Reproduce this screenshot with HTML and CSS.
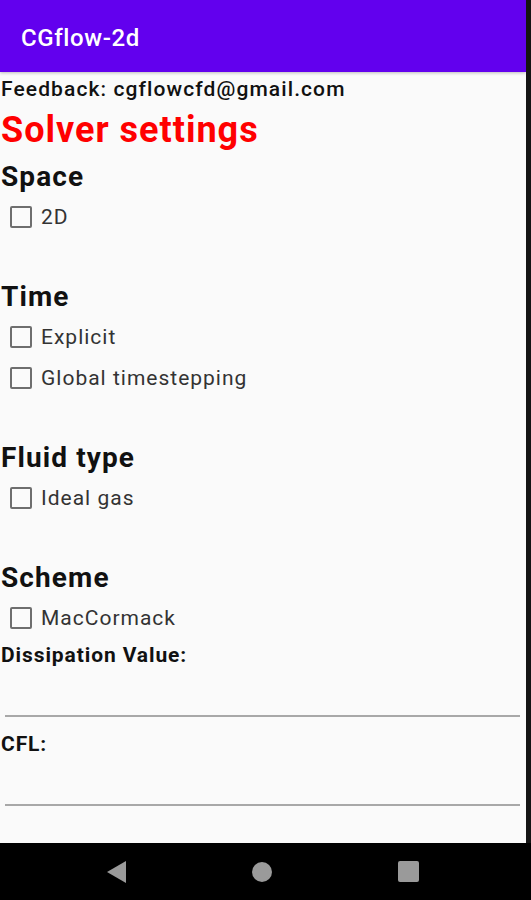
FILE: index.html
```html
<!DOCTYPE html>
<html lang="en">
<head>
    <meta charset="UTF-8">
    <meta name="viewport" content="width=device-width, initial-scale=1.0">
    <title>CGflow-2d</title>
    <link rel="stylesheet" href="styles.css">
</head>
<body>

<div class="screen">
    <div class="app">
        <header class="app-bar">CGflow-2d</header>
        <div class="content">
            <p class="feedback">Feedback: cgflowcfd@gmail.com</p>
            <h1 class="title">Solver settings</h1>

            <div class="group">
                <h2>Space</h2>
                <label class="check"><span class="box"></span>2D</label>
            </div>

            <div class="group">
                <h2>Time</h2>
                <label class="check"><span class="box"></span>Explicit</label>
                <label class="check"><span class="box"></span>Global timestepping</label>
            </div>

            <div class="group">
                <h2>Fluid type</h2>
                <label class="check"><span class="box"></span>Ideal gas</label>
            </div>

            <div class="group last">
                <h2>Scheme</h2>
                <label class="check"><span class="box"></span>MacCormack</label>
            </div>

            <div class="field">
                <p class="field-label">Dissipation Value:</p>
                <div class="input"></div>
            </div>
            <div class="field">
                <p class="field-label">CFL:</p>
                <div class="input"></div>
            </div>
        </div>
    </div>
    <nav class="nav-bar">
        <span class="nav-back"></span>
        <span class="nav-home"></span>
        <span class="nav-recent"></span>
    </nav>
</div>

</body>
</html>
```

FILE: styles.css
```css
body {
    margin: 0;
    font-family: Roboto, "Liberation Sans", sans-serif;
    background-color: #000;
}
.screen {
    width: 531px;
    height: 900px;
    display: flex;
    flex-direction: column;
}
.app {
    height: 843px;
    background-color: #fafafa;
    border-right: 5px solid #141414;
    display: flex;
    flex-direction: column;
    overflow: hidden;
}
.app-bar {
    height: 72px;
    flex-shrink: 0;
    background-color: #6200ee;
    color: #fff;
    font-size: 24px;
    font-weight: 500;
    letter-spacing: 0.6px;
    line-height: 76px;
    padding-left: 21px;
    box-shadow: 0 1px 3px rgba(0,0,0,0.25);
    position: relative;
}
.content {
    padding-left: 1px;
}
.feedback {
    margin: 0;
    padding-top: 3px;
    font-size: 21px;
    font-weight: 500;
    letter-spacing: 1.1px;
    line-height: 28px;
    color: #111;
}
.title {
    margin: 0;
    font-size: 36px;
    font-weight: 700;
    letter-spacing: 1px;
    line-height: 55px;
    color: #ff0000;
}
h2 {
    margin: 0;
    font-size: 28px;
    font-weight: 700;
    letter-spacing: 1.1px;
    line-height: 38px;
    color: #111;
}
.group {
    margin-bottom: 41px;
}
.group.last {
    margin-bottom: 0;
}
.check {
    display: flex;
    align-items: center;
    gap: 9px;
    height: 41px;
    padding-left: 9px;
    font-size: 21px;
    letter-spacing: 1px;
    color: #333;
}
.box {
    width: 18px;
    height: 18px;
    border: 2px solid #6e6e6e;
    border-radius: 2px;
}
.field-label {
    margin: 0;
    font-size: 21px;
    font-weight: 700;
    letter-spacing: 0.9px;
    line-height: 34px;
    color: #111;
}
.input {
    height: 43px;
    margin: 0 6px 10px 4px;
    border-bottom: 2px solid #a8a8a8;
}
.nav-bar {
    flex: 1;
    display: flex;
    align-items: center;
    justify-content: space-between;
    padding: 0 112px 0 107px;
    background-color: #000;
}
.nav-back {
    width: 0;
    height: 0;
    border-top: 11px solid transparent;
    border-bottom: 11px solid transparent;
    border-right: 19px solid #9a9a9a;
}
.nav-home {
    width: 20px;
    height: 20px;
    border-radius: 50%;
    background-color: #9a9a9a;
}
.nav-recent {
    width: 21px;
    height: 21px;
    border-radius: 2px;
    background-color: #9a9a9a;
}
```
